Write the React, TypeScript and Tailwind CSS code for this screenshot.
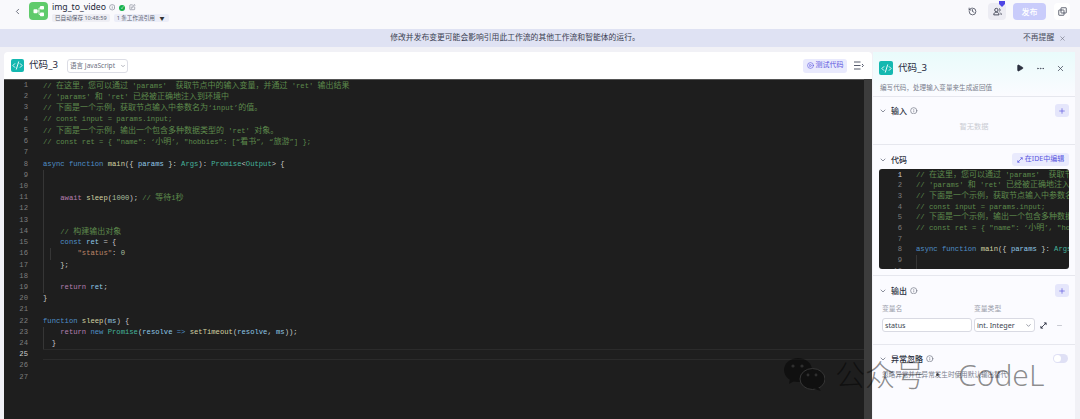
import React from 'react';
import { ChevronDown, ChevronLeft, CirclePlay, CodeXml, Ellipsis, History, Info, Minus, Play, Plus, SquarePen, X } from 'lucide-react';

type Token = [string, string];

const C = 'text-[#5d8a4c]';
const K = 'text-[#4f8fc7]';
const P = 'text-[#b57fb0]';
const F = 'text-[#d2d2a2]';
const V = 'text-[#8fc8e8]';
const T = 'text-[#45b49c]';
const S = 'text-[#bd8468]';
const N = 'text-[#a6bd9f]';
const D = 'text-[#c8c8c8]';

const codeLines: Token[][] = [
  [[C, "// 在这里，您可以通过 'params'  获取节点中的输入变量，并通过 'ret' 输出结果"]],
  [[C, "// 'params' 和 'ret' 已经被正确地注入到环境中"]],
  [[C, '// 下面是一个示例，获取节点输入中参数名为‘input’的值。']],
  [[C, '// const input = params.input;']],
  [[C, "// 下面是一个示例，输出一个包含多种数据类型的 'ret' 对象。"]],
  [[C, '// const ret = { "name": ‘小明’, "hobbies": [“看书”, “旅游”] };']],
  [],
  [[K, 'async function '], [F, 'main'], [D, '({ '], [V, 'params'], [D, ' }: '], [T, 'Args'], [D, '): '], [T, 'Promise'], [D, '<'], [T, 'Output'], [D, '> {']],
  [],
  [],
  [[D, '    '], [P, 'await '], [F, 'sleep'], [D, '('], [N, '1000'], [D, '); '], [C, '// 等待1秒']],
  [],
  [],
  [[D, '    '], [C, '// 构建输出对象']],
  [[D, '    '], [K, 'const '], [V, 'ret'], [D, ' = {']],
  [[D, '        '], [S, '"status"'], [D, ': '], [N, '0']],
  [[D, '    };']],
  [],
  [[D, '    '], [P, 'return '], [V, 'ret'], [D, ';']],
  [[D, '}']],
  [],
  [[K, 'function '], [F, 'sleep'], [D, '('], [V, 'ms'], [D, ') {']],
  [[D, '    '], [P, 'return '], [K, 'new '], [T, 'Promise'], [D, '('], [V, 'resolve'], [K, ' => '], [F, 'setTimeout'], [D, '('], [V, 'resolve'], [D, ', '], [V, 'ms'], [D, '));']],
  [[D, '  }']],
  [],
  [],
  [],
];

const guided = (n: number) => (n >= 9 && n <= 19) || n === 23 || n === 24;

const MONO = "font-['Liberation_Mono','Noto_Sans_CJK_SC',monospace]";

// chinese glyphs sit a bit larger than the latin ones in the editor font
const MixedText: React.FC<{ text: string }> = ({ text }) => (
  <>
    {text.split(/([\u4e00-\u9fff，。]+)/).map((part, i) =>
      i % 2 === 1 ? (
        <span key={i} className="text-[8px]">
          {part}
        </span>
      ) : (
        part
      ),
    )}
  </>
);

const CodeRows: React.FC<{ count: number; lineH: string; gutter: string; numRight: string; boldFirst?: boolean; highlight?: boolean }> = ({
  count,
  lineH,
  gutter,
  numRight,
  boldFirst,
  highlight,
}) => (
  <>
    {codeLines.slice(0, count).map((tokens, i) => {
      const n = i + 1;
      const guide = guided(n) ? 'shadow-[inset_1px_0_0_#363636]' : '';
      const active = highlight && n === 25 ? 'border-y border-[#2b2b2b]' : '';
      return (
        <div key={n} className={`flex ${lineH} ${MONO} text-[7.2px] whitespace-pre`}>
          <div className={`${gutter} ${numRight} shrink-0 text-right ${(boldFirst && n === 1) || (highlight && n === 25) ? 'text-[#d0d0d0]' : 'text-[#7d7d7d]'}`}>{n}</div>
          <div className={`relative flex-1 ${guide} ${active}`}>
            {n === 16 && highlight && <span className="absolute left-[7px] top-0 h-full w-px bg-[#363636]" />}
            {tokens.map(([cls, text], j) => (
              <span key={j} className={cls}>
                <MixedText text={text} />
              </span>
            ))}
          </div>
        </div>
      );
    })}
  </>
);

const CodeBadge: React.FC<{ box: string }> = ({ box }) => (
  <div className={`${box} flex shrink-0 items-center justify-center rounded-[2px] bg-[#14b8b0] text-white`}>
    <CodeXml size={11} strokeWidth={2} />
  </div>
);

const SectionTitle: React.FC<{ title: string; info?: boolean; right?: React.ReactNode }> = ({ title, info, right }) => (
  <div className="flex h-[13px] items-center">
    <ChevronDown size={8} className="ml-[6px] text-[#555a6b]" />
    <span className="ml-[4px] text-[8px] font-medium text-[#2c3040]">{title}</span>
    {info && <Info size={7.5} className="ml-[3px] text-[#6a6e7d]" />}
    <div className="ml-auto mr-[6px]">{right}</div>
  </div>
);

const AddButton = () => (
  <div className="flex h-[13px] w-[14px] items-center justify-center rounded-[3px] bg-[#e5e6fb] text-[#5a55e0]">
    <Plus size={8} />
  </div>
);

export default function App() {
  return (
    <div className="relative flex h-[419px] w-[1080px] flex-col overflow-hidden bg-[#f1f1f6] font-['Noto_Sans','Noto_Sans_CJK_SC',sans-serif]">
      {/* top bar */}
      <div className="flex h-[29px] shrink-0 items-start bg-[#f9f9fc] pt-[2px]">
        <ChevronLeft size={9} className="ml-[13px] mt-[5px] text-[#444a5a]" />
        <div className="ml-[7px] flex h-[18px] w-[19px] items-center justify-center rounded-[4px] bg-[#5fcb6b]">
          <svg width="12" height="12" viewBox="0 0 12 12" fill="#fff">
            <rect x="0.5" y="4.2" width="4" height="4" rx="0.8" />
            <rect x="7" y="1" width="4" height="3.6" rx="0.8" />
            <rect x="7" y="7.6" width="4" height="3.6" rx="0.8" />
            <path d="M4 6h2M6 3v6.4M6 3h1.5M6 9.4h1.5" stroke="#fff" strokeWidth="0.8" fill="none" />
          </svg>
        </div>
        <div className="ml-[4px] flex flex-col">
          <div className="flex h-[11px] items-center">
            <span className="text-[8.7px] leading-none text-[#23273a]">img_to_video</span>
            <Info size={6.5} className="ml-[3px] text-[#6b6f80]" />
            <div className="ml-[4px] flex h-[6px] w-[6px] items-center justify-center rounded-full bg-[#14b04a] text-[4px] leading-none text-white">✓</div>
            <SquarePen size={6.5} className="ml-[4px] text-[#6b6f80]" />
          </div>
          <div className="mt-[1px] flex items-center gap-[4px]">
            <span className="rounded-[2px] bg-[#eeeef4] px-[3px] text-[5.6px] leading-[8px] text-[#5b5f70]">已自动保存 10:48:59</span>
            <span className="flex w-[55px] items-center rounded-[2px] bg-[#eceef8] pl-[3px] text-[5.6px] leading-[8px] text-[#5b5f70]">
              1 条工作流引用
              <span className="ml-auto mr-[4px] text-[5px] text-[#333]">▼</span>
            </span>
          </div>
        </div>
        <div className="ml-auto flex items-start">
          <History size={9} className="mt-[5px] text-[#3b3f50]" />
          <div className="relative ml-[11px] mt-[1px] flex h-[17px] w-[18px] items-center justify-center rounded-[4px] bg-[#ececf3]">
            <svg width="9" height="9" viewBox="0 0 24 24" fill="none" stroke="#3b3f50" strokeWidth="2.4">
              <circle cx="9" cy="8" r="4.5" />
              <path d="M2 21c0-5 3-7 7-7s7 2 7 7zM16 4c3 0 4 6 1 8M19 15c2 1 3 3 3 6" />
            </svg>
            <svg width="6" height="6" viewBox="0 0 6 6" className="absolute right-[1px] top-[-2px]">
              <path d="M0 0h6v3L3 6 0 3z" fill="#4f46e5" />
            </svg>
          </div>
          <div className="ml-[7px] mt-[1px] flex h-[17px] w-[33px] items-center justify-center rounded-[4px] bg-[#c9ccfb] text-[8px] font-medium text-white">发布</div>
          <div className="ml-[8px] mr-[10px] mt-[1px] flex h-[17px] w-[16px] items-center justify-center rounded-[4px] bg-white text-[#444]">
            <svg width="9" height="9" viewBox="0 0 24 24" fill="none" stroke="#444a5a" strokeWidth="2.2">
              <rect x="8" y="2" width="14" height="14" rx="1" />
              <rect x="2" y="8" width="14" height="14" rx="1" />
            </svg>
          </div>
        </div>
      </div>

      {/* notice banner */}
      <div className="flex h-[18px] shrink-0 items-center bg-[#dfe2f3]">
        <div className="flex-1 pl-[10px] text-center text-[7.8px] text-[#3b3f52]">修改并发布变更可能会影响引用此工作流的其他工作流和智能体的运行。</div>
        <div className="flex w-[60px] items-center">
          <span className="ml-[3px] text-[7.8px] text-[#4a4e60]">不再提醒</span>
          <X size={7} className="ml-[5px] text-[#6a6e7d]" />
        </div>
      </div>

      <div className="flex min-h-0 flex-1 pt-[5px]">
        {/* code panel */}
        <div className="ml-[4px] flex w-[868px] shrink-0 flex-col">
          <div className="flex h-[27px] shrink-0 items-center rounded-t-[4px] bg-white">
            <div className="ml-[7px]">
              <CodeBadge box="h-[13px] w-[13px]" />
            </div>
            <span className="ml-[5px] text-[9.6px] text-[#23273a]">代码_3</span>
            <div className="ml-[9px] flex h-[14px] w-[61px] items-center rounded-[3px] border border-[#dcdde5] pl-[2px] text-[6.6px] text-[#6b6f80]">
              语言 JavaScript
              <ChevronDown size={6} className="ml-auto mr-[1px]" />
            </div>
            <div className="ml-auto flex h-[14px] w-[44px] items-center justify-center rounded-[3px] bg-[#e9eafd] text-[7px] text-[#5a55e0]">
              <CirclePlay size={7} className="mr-[2px]" />
              测试代码
            </div>
            <svg width="10" height="9" viewBox="0 0 10 9" className="ml-[7px] mr-[8px]" stroke="#555a6b" strokeWidth="1" fill="none">
              <path d="M0 1h6.5M0 4.5h6.5M0 8h6.5M8 3l1.4 1.5L8 6" />
            </svg>
          </div>
          <div className="flex min-h-0 flex-1">
            <div className="flex-1 border-t border-[#555] bg-[#1e1e1e]">
              <CodeRows count={27} lineH="h-[11.23px] leading-[11.23px]" gutter="w-[39px]" numRight="pr-[15px]" highlight />
            </div>
            <div className="w-[8px] bg-[#3c3c3c]" />
          </div>
        </div>

        {/* node side panel */}
        <div className="ml-[1px] flex w-[202px] shrink-0 flex-col rounded-t-[4px] bg-[#fbfbff]">
          <div className="h-[45px] shrink-0 border-b border-[#e6e7ee] bg-[linear-gradient(180deg,#e9fbfb,#fbfbff)]">
            <div className="flex h-[27px] items-center pt-[5px]">
              <div className="ml-[6px]">
                <CodeBadge box="h-[14px] w-[14px]" />
              </div>
              <span className="ml-[5px] text-[9.6px] text-[#23273a]">代码_3</span>
              <Play size={8} fill="#2c3040" className="ml-auto text-[#2c3040]" />
              <Ellipsis size={9} className="ml-[12px] text-[#444a5a]" />
              <X size={9} className="ml-[11px] mr-[10px] text-[#444a5a]" />
            </div>
            <div className="mt-[4px] pl-[7px] text-[6.6px] leading-[9px] text-[#7a7e8d]">编写代码，处理输入变量来生成返回值</div>
          </div>

          <div className="h-[48px] shrink-0 border-b border-[#e6e7ee] pt-[7px]">
            <SectionTitle title="输入" info right={<AddButton />} />
            <div className="mt-[4px] text-center text-[7.2px] text-[#c9cbd3]">暂无数据</div>
          </div>

          <div className="h-[131px] shrink-0 border-b border-[#e6e7ee] pt-[8px]">
            <SectionTitle
              title="代码"
              right={
                <div className="flex h-[13px] w-[57px] items-center justify-center rounded-[3px] bg-[#e9eafd] text-[7px] text-[#5a55e0]">
                  <svg width="6" height="6" viewBox="0 0 8 8" className="mr-[2px]" stroke="#5a55e0" fill="none">
                    <path d="M1 7l6-6M4.5 1H7v2.5M1 4.5V7h2.5" />
                  </svg>
                  在IDE中编辑
                </div>
              }
            />
            <div className="ml-[6px] mr-[6px] mt-[3px] h-[100px] overflow-hidden rounded-[3px] bg-[#1e1e1e]">
              <div className="w-[320px] pt-[0.5px]">
                <CodeRows count={10} lineH="h-[10.7px] leading-[10.7px]" gutter="w-[37px]" numRight="pr-[14px]" boldFirst />
              </div>
            </div>
          </div>

          <div className="h-[69px] shrink-0 border-b border-[#e6e7ee] pt-[8px]">
            <SectionTitle title="输出" info right={<AddButton />} />
            <div className="mt-[7px] flex pl-[9px] text-[6.8px] leading-[9px] text-[#9a9daa]">
              <span className="w-[92px]">变量名</span>
              <span>变量类型</span>
            </div>
            <div className="mt-[5px] flex items-center pl-[9px]">
              <div className="flex h-[14px] w-[90px] items-center rounded-[3px] border border-[#d9dae3] bg-white pl-[2px] text-[7.2px] text-[#3b3f50]">status</div>
              <div className="ml-[2px] flex h-[14px] w-[61px] items-center rounded-[3px] border border-[#d9dae3] bg-white pl-[2px] text-[7.2px] text-[#3b3f50]">
                int. Integer
                <ChevronDown size={7} className="ml-auto mr-[2px] text-[#555a6b]" />
              </div>
              <svg width="7" height="7" viewBox="0 0 8 8" className="ml-[5px]" stroke="#2c3040" fill="none">
                <path d="M1 7l6-6M4.5 1H7v2.5M1 4.5V7h2.5" />
              </svg>
              <Minus size={7} className="ml-[9px] text-[#a5a8b4]" />
            </div>
          </div>

          <div className="pt-[7px]">
            <div className="flex h-[13px] items-center">
              <ChevronDown size={8} className="ml-[6px] text-[#555a6b]" />
              <span className="ml-[4px] text-[8px] font-medium text-[#2c3040]">异常忽略</span>
              <Info size={7.5} className="ml-[3px] text-[#6a6e7d]" />
              <div className="ml-auto mr-[7px] flex h-[9px] w-[15px] items-center rounded-full bg-[#dfe0f5] pl-[1px]">
                <span className="h-[7px] w-[7px] rounded-full bg-white" />
              </div>
            </div>
            <div className="mt-[5px] pl-[9px] text-[6.6px] leading-[9px] text-[#7a7e8d]">忽略异常并在异常发生时使用默认输出替代</div>
          </div>
        </div>
        <div className="flex-1 bg-[#f1f1f6]" />
      </div>

      {/* wechat watermark over the page */}
      <div className="absolute left-[784px] top-[358px] flex items-center text-black/45">
        <svg width="41" height="33" viewBox="0 0 41 33" className="opacity-45">
          <ellipse cx="14" cy="12" rx="14" ry="12" fill="#000" />
          <path d="M6 20l-1 6 7-4z" fill="#000" />
          <ellipse cx="28.5" cy="21" rx="12.5" ry="10.5" fill="#000" stroke="#555" strokeWidth="1" />
          <path d="M34 29l3 4-7-2z" fill="#000" />
          <circle cx="9" cy="8" r="1.6" fill="#444" />
          <circle cx="18" cy="8" r="1.6" fill="#444" />
          <circle cx="24" cy="17" r="1.4" fill="#444" />
          <circle cx="32" cy="17" r="1.4" fill="#444" />
        </svg>
        <span className="ml-[10px] text-[30px] font-light leading-none">公众号</span>
        <span className="ml-[11px] h-[3px] w-[3px] rounded-full bg-black/60" />
        <span className="ml-[19px] text-[30px] font-light leading-none">CodeL</span>
      </div>
    </div>
  );
}
